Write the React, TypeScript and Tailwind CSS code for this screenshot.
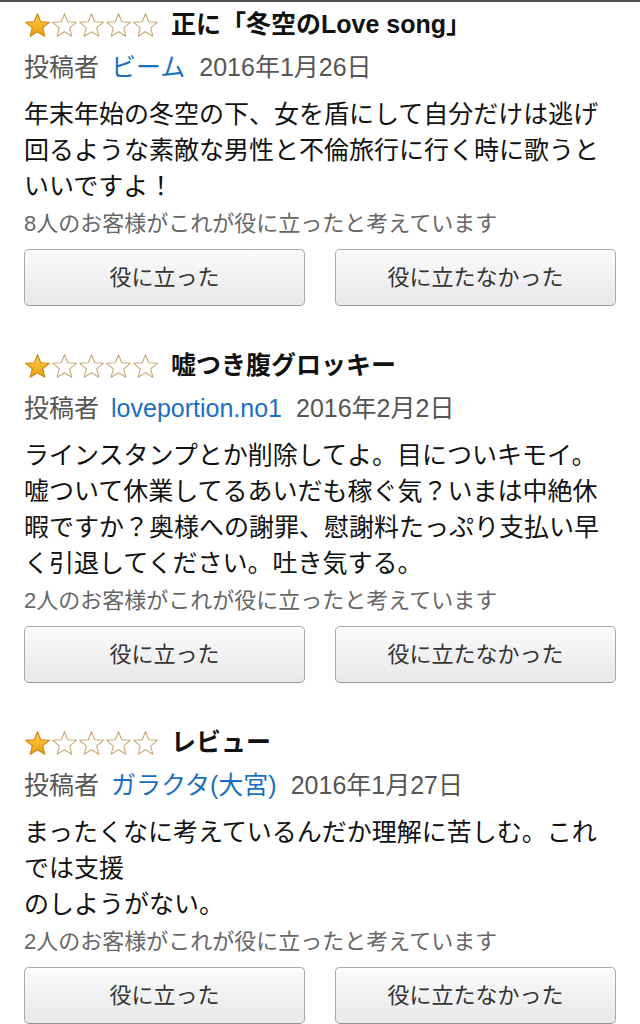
const FONT = { fontFamily: '"Liberation Sans", "Noto Sans CJK JP", sans-serif' };

interface Review {
  title: string;
  author: string;
  date: string;
  body: string[];
  helpful: number;
}

const reviews: Review[] = [
  {
    title: '正に「冬空のLove song」',
    author: 'ビーム',
    date: '2016年1月26日',
    body: ['年末年始の冬空の下、女を盾にして自分だけは逃げ回るような素敵な男性と不倫旅行に行く時に歌うといいですよ！'],
    helpful: 8,
  },
  {
    title: '嘘つき腹グロッキー',
    author: 'loveportion.no1',
    date: '2016年2月2日',
    body: ['ラインスタンプとか削除してよ。目についキモイ。嘘ついて休業してるあいだも稼ぐ気？いまは中絶休暇ですか？奥様への謝罪、慰謝料たっぷり支払い早く引退してください。吐き気する。'],
    helpful: 2,
  },
  {
    title: 'レビュー',
    author: 'ガラクタ(大宮)',
    date: '2016年1月27日',
    body: ['まったくなに考えているんだか理解に苦しむ。これでは支援', 'のしようがない。'],
    helpful: 2,
  },
];

function Star({ filled }: { filled: boolean }) {
  return (
    <svg width="27" height="27" viewBox="-0.6 -0.6 25.2 25.2">
      <defs>
        <linearGradient id="starFill" x1="0" y1="0" x2="0" y2="1">
          <stop offset="0" stopColor="#ffd04a" />
          <stop offset="1" stopColor="#ee9c0c" />
        </linearGradient>
      </defs>
      <path
        d="M12 1L15 8.5L23.03 9.02L16.85 14.2L18.82 21.98L12 17.8L5.18 21.98L7.15 14.2L0.97 9.02L9 8.5Z"
        fill={filled ? 'url(#starFill)' : '#ffffff'}
        stroke={filled ? '#c98510' : '#c7a674'}
        strokeWidth="1"
        strokeLinejoin="round"
      />
    </svg>
  );
}

function HelpButton({ label }: { label: string }) {
  return (
    <button
      className="flex-1 h-[57px] rounded-[5px] border border-[#a9a9a9] border-b-[#969696] bg-gradient-to-b from-[#fbfbfb] to-[#e8e8eb] text-[22px] text-[#333] shadow-[inset_0_1px_0_#fff]"
      style={FONT}
    >
      {label}
    </button>
  );
}

function ReviewBlock({ review }: { review: Review }) {
  return (
    <div className="flex flex-col">
      <div className="flex items-center h-[34px]">
        <div className="flex items-center">
          {[0, 1, 2, 3, 4].map((i) => (
            <Star key={i} filled={i === 0} />
          ))}
        </div>
        <span className="ml-[12px] text-[25px] font-bold text-[#111]">{review.title}</span>
      </div>
      <div className="mt-[8px] h-[36px] flex items-center text-[25px] text-[#555]">
        <span>投稿者</span>
        <span className="ml-[12px] text-[#1a6fc0]">{review.author}</span>
        <span className="ml-[14px]">{review.date}</span>
      </div>
      <div className="mt-[10px] text-[25px] leading-[36px] text-[#111] pr-[22px]">
        {review.body.map((line, i) => (
          <div key={i}>{line}</div>
        ))}
      </div>
      <div className="mt-[7px] text-[22px] leading-[26px] text-[#666]">
        {review.helpful}人のお客様がこれが役に立ったと考えています
      </div>
      <div className="mt-[12px] flex gap-[30px] pr-[24px]">
        <HelpButton label="役に立った" />
        <HelpButton label="役に立たなかった" />
      </div>
    </div>
  );
}

export default function App() {
  return (
    <div className="w-[640px] h-[1024px] overflow-hidden bg-white border-t-2 border-[#4d5257]" style={FONT}>
      <div className="pl-[24px] pt-[6px] flex flex-col gap-[43px]">
        {reviews.map((r, i) => (
          <ReviewBlock key={i} review={r} />
        ))}
      </div>
    </div>
  );
}
